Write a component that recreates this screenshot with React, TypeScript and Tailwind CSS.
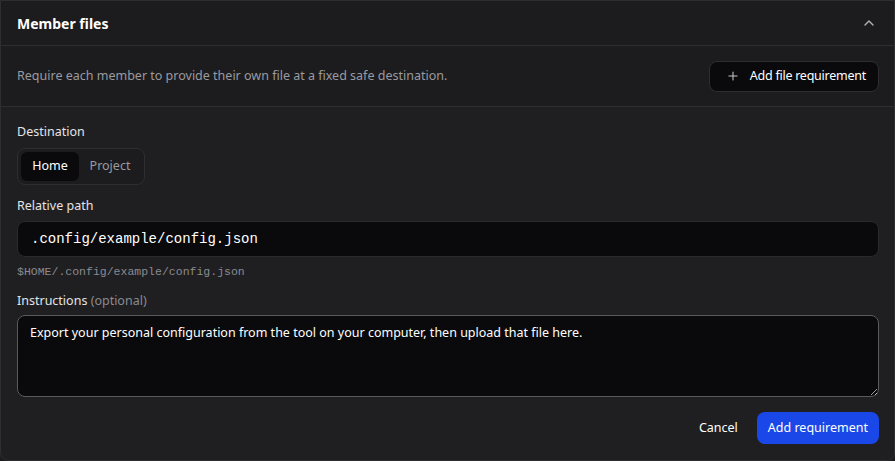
import { ChevronUp, Plus } from "lucide-react";

export default function App() {
  return (
    <div className="w-[895px] h-[461px] bg-[#1c1c1e] font-['Noto_Sans',sans-serif]">
      <div className="h-full border border-[#2e2e31] rounded-b-lg overflow-hidden bg-[#1f1f21]">
        <div className="h-[45px] flex items-center justify-between pl-4 pr-4 bg-[#1c1c1e] border-b border-[#2e2e31]">
          <h3 className="text-[14px] font-bold text-white">Member files</h3>
          <ChevronUp className="w-4 h-4 text-[#b4b4b8] mr-[1px]" strokeWidth={2} />
        </div>

        <div className="h-[61px] flex items-center justify-between pl-4 pr-[15px] border-b border-[#2e2e31] bg-[#1c1c1e]">
          <p className="text-[12.5px] text-[#9a9aa0]">
            Require each member to provide their own file at a fixed safe destination.
          </p>
          <button className="h-[31px] flex items-center gap-[8px] pl-[16px] pr-[12px] bg-[#0a0a0c] border border-[#2e2e31] rounded-lg text-[12.5px] text-white">
            <Plus className="w-[14px] h-[14px] text-[#c8c8cc]" strokeWidth={1.8} />
            <span className="ml-[2px] tracking-[-0.25px]">Add file requirement</span>
          </button>
        </div>

        <div className="pl-4 pr-[15px] pt-[16px]">
          <div className="text-[12.5px] text-[#e4e4e7] leading-[18px]">Destination</div>
          <div className="mt-[7px] inline-flex p-[3px] border border-[#2e2e31] rounded-lg bg-[#1c1c1e]">
            <button className="h-[29px] w-[58px] rounded-md bg-[#0a0a0c] text-[12.5px] text-white">Home</button>
            <button className="h-[29px] w-[62px] text-[12.5px] text-[#9a9aa0]">Project</button>
          </div>

          <div className="mt-[12px] text-[12.5px] text-[#e4e4e7] leading-[18px]">Relative path</div>
          <div className="mt-[6px] h-[36px] flex items-center px-[13px] bg-[#0a0a0c] border border-[#2a2a2d] rounded-lg font-['Liberation_Mono',monospace] text-[14px] text-white">
            .config/example/config.json
          </div>
          <div className="mt-[8px] font-['Liberation_Mono',monospace] text-[11.5px] text-[#8a8a90] leading-[14px]">
            $HOME/.config/example/config.json
          </div>

          <div className="mt-[13px] text-[12.5px] text-[#e4e4e7] leading-[18px]">
            Instructions <span className="text-[#8a8a90]">(optional)</span>
          </div>
          <textarea
            className="mt-[5px] block w-full h-[82px] px-[12px] py-[7px] bg-[#0a0a0c] border border-[#5a5a5e] rounded-lg text-[12.5px] text-white leading-[20px] outline-none"
            defaultValue="Export your personal configuration from the tool on your computer, then upload that file here."
          />

          <div className="mt-[15px] flex items-center justify-end gap-[19px]">
            <button className="text-[12.5px] text-white">Cancel</button>
            <button className="h-[32px] px-[11px] rounded-lg bg-[#1a48e8] text-[12.5px] text-white">Add requirement</button>
          </div>
        </div>
      </div>
    </div>
  );
}
